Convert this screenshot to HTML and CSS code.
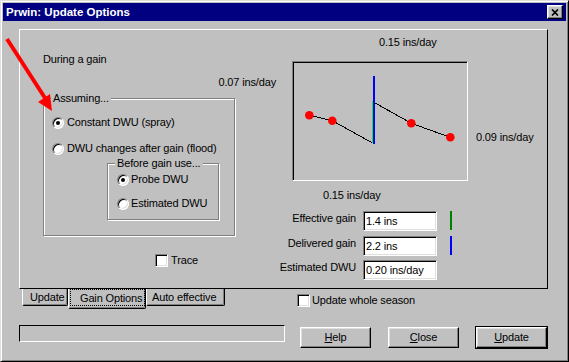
FILE: index.html
```html
<!DOCTYPE html>
<html lang="en">
<head>
  <meta charset="UTF-8">
  <title>Prwin: Update Options</title>
  <link rel="stylesheet" href="styles.css">
</head>
<body>
  <div class="window">

    <!-- Title bar -->
    <div class="titlebar">
      <span class="title">Prwin: Update Options</span>
      <span class="close-btn">
        <svg width="8" height="7" viewBox="0 0 8 7"><path d="M1 0.5 L7 6.5 M7 0.5 L1 6.5" stroke="#000" stroke-width="1.7"/></svg>
      </span>
    </div>

    <!-- Tab page -->
    <div class="panel">
      <div class="col-left">
        <div class="during">During a gain</div>
        <div class="rate-left">0.07 ins/day</div>

        <div class="group assuming">
          <span class="group-label">Assuming...</span>
          <label class="option opt-spray"><span class="radio on"></span>Constant DWU (spray)</label>
          <label class="option opt-flood"><span class="radio"></span>DWU changes after gain (flood)</label>

          <div class="group before">
            <span class="group-label">Before gain use...</span>
            <label class="option opt-probe"><span class="radio on"></span>Probe DWU</label>
            <label class="option opt-est"><span class="radio"></span>Estimated DWU</label>
          </div>
        </div>

        <label class="option trace"><span class="check"></span>Trace</label>
      </div>

      <div class="col-right">
        <div class="rate-top">0.15 ins/day</div>
        <div class="graph-row">
          <div class="graph">
            <svg width="174" height="118" viewBox="0 0 174 118">
              <g stroke="#000" stroke-width="1" shape-rendering="crispEdges" fill="none">
                <polyline points="16.3,53.3 39.3,58.7 79.5,81"/>
                <polyline points="79.5,39.5 118.3,61.3 157.3,75.3"/>
              </g>
              <line x1="79.5" y1="39" x2="79.5" y2="81" stroke="#00ff00" stroke-width="1" shape-rendering="crispEdges"/>
              <line x1="81" y1="14" x2="81" y2="82" stroke="#0000ff" stroke-width="2" shape-rendering="crispEdges"/>
              <g fill="#ff0000">
                <circle cx="16.3" cy="53.3" r="4.3"/>
                <circle cx="39.3" cy="58.7" r="4.3"/>
                <circle cx="118.3" cy="61.3" r="4.3"/>
                <circle cx="157.3" cy="75.3" r="4.3"/>
              </g>
            </svg>
          </div>
          <div class="rate-right">0.09 ins/day</div>
        </div>
        <div class="rate-bottom">0.15 ins/day</div>

        <div class="fields">
          <span class="field-label">Effective gain</span>
          <span class="edit">1.4 ins</span>
          <span class="bar green"></span>

          <span class="field-label">Delivered gain</span>
          <span class="edit">2.2 ins</span>
          <span class="bar blue"></span>

          <span class="field-label">Estimated DWU</span>
          <span class="edit">0.20 ins/day</span>
          <span></span>
        </div>
      </div>
    </div>

    <!-- Tabs -->
    <div class="tab-row">
      <div class="tabs">
        <span class="tab t-update">Update</span>
        <span class="tab active"><span class="focus">Gain Options</span></span>
        <span class="tab t-auto">Auto effective</span>
      </div>
      <label class="option season"><span class="check"></span>Update whole season</label>
    </div>

    <!-- Status and buttons -->
    <div class="bottom-row">
      <div class="status"></div>
      <span class="btn help"><u>H</u>elp</span>
      <span class="btn close"><u>C</u>lose</span>
      <span class="default-frame"><span class="btn"><u>U</u>pdate</span></span>
    </div>

    <!-- Red pointer drawn over the dialog -->
    <svg class="arrow" width="569" height="362" viewBox="0 0 569 362">
      <line x1="7" y1="39" x2="45" y2="98" stroke="#ff0000" stroke-width="4"/>
      <polygon points="52,111 50,94 38,102" fill="#ff0000"/>
    </svg>
  </div>
</body>
</html>
```

FILE: styles.css
```css
* {
  margin: 0;
  padding: 0;
  box-sizing: border-box;
}

body {
  background-color: #c0c0c0;
  font-family: "Liberation Sans", Arial, sans-serif;
  font-size: 11px;
  line-height: 13px;
  letter-spacing: -0.15px;
  color: #000;
}

/* Dialog window */
.window {
  position: relative;
  width: 569px;
  height: 362px;
  padding: 2px;
  background-color: #c0c0c0;
  border: 1px solid;
  border-color: #dfdfdf #000 #000 #dfdfdf;
  box-shadow: inset 1px 1px #fff, inset -1px -1px #808080;
}

/* Title bar */
.titlebar {
  display: flex;
  align-items: center;
  height: 18px;
  padding-left: 3px;
  background-color: #000080;
  color: #fff;
}

.title {
  font-weight: bold;
  font-size: 11.5px;
  letter-spacing: 0;
  white-space: nowrap;
}

.close-btn {
  display: flex;
  align-items: center;
  justify-content: center;
  width: 16px;
  height: 14px;
  margin-left: auto;
  margin-right: 3px;
  background-color: #c0c0c0;
  border: 1px solid;
  border-color: #fff #000 #000 #fff;
  box-shadow: inset -1px -1px #808080, inset 1px 1px #dfdfdf;
}

.close-btn svg {
  display: block;
}

/* Tab page */
.panel {
  display: flex;
  width: 529px;
  height: 260px;
  margin: 8px 0 0 16px;
  border: 1px solid;
  border-color: #fff #000 #000 #fff;
}

.col-left {
  display: flex;
  flex-direction: column;
  align-items: flex-start;
  width: 258px;
  flex: none;
}

.during {
  margin: 23px 0 0 23px;
}

.rate-left {
  align-self: flex-end;
  margin: 10px 2px 0 0;
  white-space: nowrap;
}

/* Etched group boxes */
.group {
  display: flex;
  flex-direction: column;
  align-items: flex-start;
  border: 1px solid #808080;
  box-shadow: inset 1px 1px #fff, 1px 1px #fff;
}

.group-label {
  margin: -7px 0 0 7px;
  padding: 0 2px;
  background-color: #c0c0c0;
  white-space: nowrap;
}

.assuming {
  width: 192px;
  height: 138px;
  margin: 9px 0 0 23px;
}

.before {
  width: 112px;
  height: 57px;
  margin: 8px 0 0 63px;
}

/* Radio buttons and check boxes */
.option {
  display: flex;
  align-items: center;
  gap: 3px;
  height: 13px;
  white-space: nowrap;
}

.opt-spray { margin: 11px 0 0 8px; }
.opt-flood { margin: 13px 0 0 8px; }
.opt-probe { margin: 3px 0 0 9px; gap: 2px; }
.opt-est { margin: 11px 0 0 9px; gap: 2px; }
.trace { margin: 18px 0 0 135px; }

.radio {
  display: flex;
  align-items: center;
  justify-content: center;
  flex: none;
  width: 12px;
  height: 12px;
  border-radius: 50%;
  background-color: #fff;
  border: 1px solid;
  border-color: #808080 #fff #fff #808080;
  box-shadow: inset 1px 1px #000, inset -1px -1px #dfdfdf;
}

.radio.on::after {
  content: '';
  width: 4px;
  height: 4px;
  border-radius: 50%;
  background-color: #000;
}

.check {
  flex: none;
  width: 13px;
  height: 13px;
  background-color: #fff;
  border: 1px solid;
  border-color: #808080 #fff #fff #808080;
  box-shadow: inset 1px 1px #000, inset -1px -1px #dfdfdf;
}

/* Right side: graph and values */
.col-right {
  display: flex;
  flex-direction: column;
  align-items: flex-start;
  flex: 1;
}

.rate-top {
  margin: 6px 0 0 101px;
}

.graph-row {
  display: flex;
  align-items: flex-start;
  margin: 12px 0 0 14px;
}

.graph {
  width: 176px;
  height: 120px;
  border: 1px solid;
  border-color: #808080 #fff #fff #808080;
  box-shadow: inset 1px 1px #000;
}

.graph svg {
  display: block;
}

.rate-right {
  margin: 70px 0 0 8px;
  white-space: nowrap;
}

.rate-bottom {
  margin: 8px 0 0 45px;
}

.fields {
  display: grid;
  grid-template-columns: 78px 74px 2px;
  grid-auto-rows: 20px;
  column-gap: 7px;
  row-gap: 4.5px;
  margin-top: 9px;
}

.field-label {
  padding-top: 1px;
  text-align: right;
  white-space: nowrap;
}

.edit {
  height: 20px;
  padding: 0 2px;
  line-height: 18px;
  background-color: #fff;
  border: 1px solid;
  border-color: #808080 #fff #fff #808080;
  box-shadow: inset 1px 1px #000, inset -1px -1px #dfdfdf;
  white-space: nowrap;
}

.bar {
  width: 2px;
  height: 19px;
  margin-left: 6px;
}

.bar.green { background-color: #008000; }
.bar.blue { background-color: #0000ff; }

/* Tabs under the page */
.tab-row {
  display: flex;
  align-items: flex-start;
}

.tabs {
  display: flex;
  align-items: flex-start;
  margin-left: 19px;
}

.tab {
  height: 17px;
  padding-top: 2px;
  border-left: 1px solid #fff;
  border-right: 1px solid #000;
  border-bottom: 1px solid #000;
  border-radius: 0 0 2px 2px;
  box-shadow: inset -1px -1px #808080;
  white-space: nowrap;
}

.t-update {
  width: 46px;
  padding-left: 7px;
}

.t-auto {
  width: 79px;
  padding-left: 5px;
}

.tab.active {
  width: 78px;
  height: 20px;
  padding: 0 0 2px 1px;
}

.focus {
  display: block;
  height: 17px;
  padding: 2px 0 0 9px;
  border: 1px dotted #000;
}

.season {
  gap: 2px;
  margin: 5px 0 0 72px;
}

/* Status box and push buttons */
.bottom-row {
  display: flex;
  align-items: flex-start;
  margin: 16px 0 0 16px;
}

.status {
  width: 266px;
  height: 17px;
  border: 1px solid;
  border-color: #000 #fff #fff #000;
}

.btn {
  display: flex;
  align-items: center;
  justify-content: center;
  width: 71px;
  height: 21px;
  border: 1px solid;
  border-color: #fff #000 #000 #fff;
  box-shadow: inset -1px -1px #808080, inset 1px 1px #dfdfdf;
  white-space: nowrap;
}

.help { margin: 2px 0 0 15px; }
.close { margin: 2px 0 0 17px; }

.default-frame {
  margin: 1px 0 0 16px;
  border: 1px solid #000;
}

/* Red pointer overlay */
.arrow {
  position: absolute;
  top: -1px;
  left: -1px;
  pointer-events: none;
}
```
